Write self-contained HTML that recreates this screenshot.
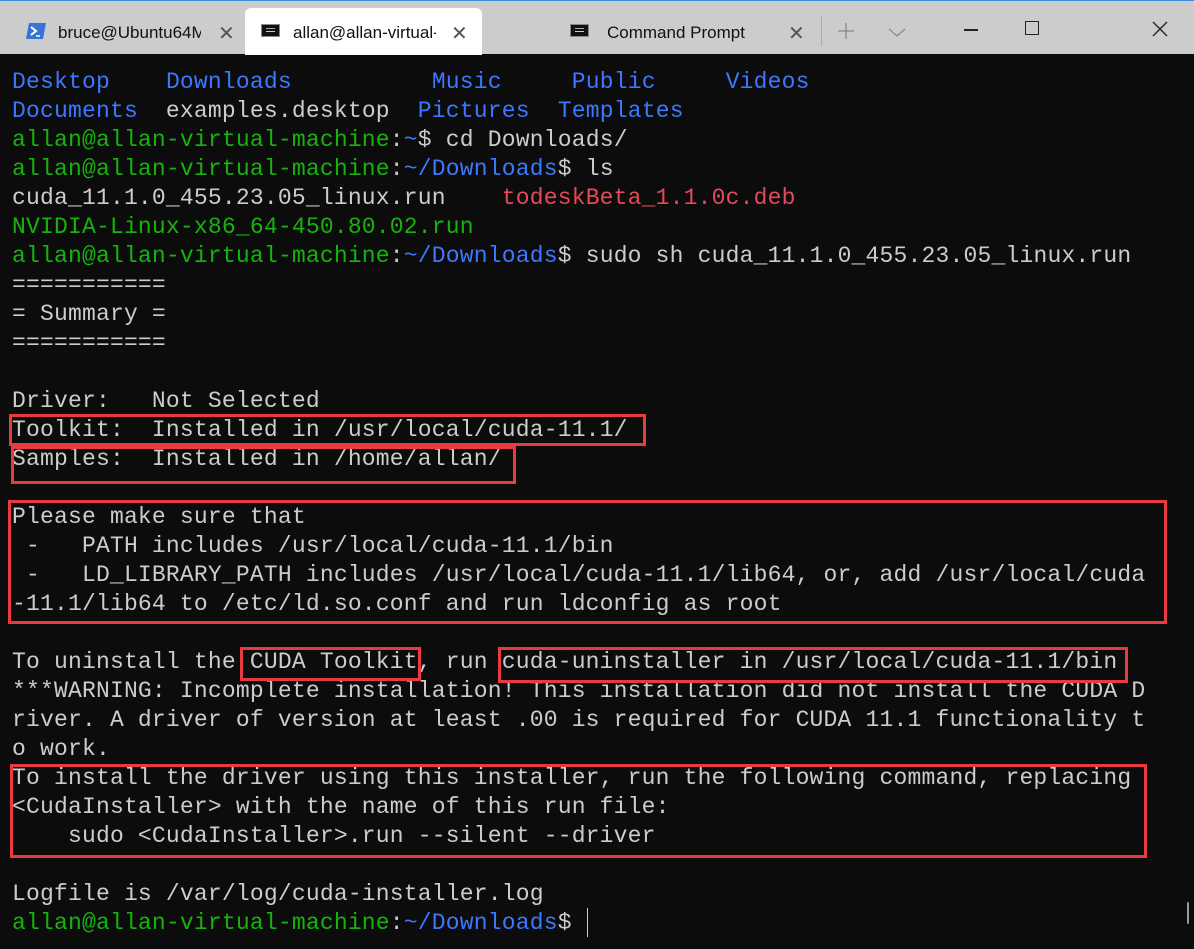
<!DOCTYPE html>
<html><head><meta charset="utf-8"><style>
html,body{margin:0;padding:0;width:1194px;height:949px;overflow:hidden;background:#0c0c0c;position:relative;font-family:"Liberation Sans",sans-serif}
.bar{position:absolute;left:0;top:0;width:1194px;height:54px;background:#cccccc;border-top:1px solid #3c8ce0;box-sizing:border-box}
.tab{position:absolute;top:22px;font-size:17px;color:#111;white-space:nowrap;overflow:hidden}
.act{position:absolute;left:245px;top:7px;width:237px;height:47px;background:#fff;border-radius:6px 6px 0 0}
.x{position:absolute;top:20px;font-size:20px;color:#555;font-weight:300}
.cmd{position:absolute;top:23px;width:19px;height:13px;background:#111;border:1px solid #888;box-sizing:border-box}
.cmd:after{content:"";position:absolute;left:4px;top:3px;width:9px;height:2px;border-top:1px solid #aaa;border-bottom:1px solid #ccc}
pre{position:absolute;left:12px;top:68px;margin:0;font-family:"Liberation Mono",monospace;font-size:23px;line-height:29px;color:#cccccc;letter-spacing:0.19px}
.b{color:#3b78ff}.g{color:#16b30c}.r{color:#e74856}
.box{position:absolute;border:3px solid #e83a3f;box-sizing:border-box}
</style></head><body>
<div class="bar">
 <svg style="position:absolute;left:26px;top:22px" width="20" height="16" viewBox="0 0 20 16"><polygon points="3,0 20,0 17,16 0,16" fill="#3a73d6"/><path d="M5 4 L10 8 L5 12" stroke="#fff" stroke-width="2" fill="none"/><path d="M10 13 H14" stroke="#fff" stroke-width="1.5"/></svg>
 <div class="tab" style="left:58px;width:143px">bruce@Ubuntu64ML</div>
 <div class="x" style="left:218px">✕</div>
 <div class="act"></div>
 <div class="cmd" style="left:261px"></div>
 <div class="tab" style="left:293px;width:143px">allan@allan-virtual-r</div>
 <div class="x" style="left:451px">✕</div>
 <div class="cmd" style="left:570px"></div>
 <div class="tab" style="left:607px">Command Prompt</div>
 <div class="x" style="left:788px">✕</div>
 <div style="position:absolute;left:821px;top:16px;width:1px;height:29px;background:#aaa"></div>
 <svg style="position:absolute;left:836px;top:20px" width="20" height="20"><path d="M10 2V18M2 10H18" stroke="#888" stroke-width="1.3"/></svg>
 <svg style="position:absolute;left:887px;top:25px" width="20" height="12"><path d="M2 3L10 10L18 3" stroke="#888" stroke-width="1.2" fill="none"/></svg>
 <div style="position:absolute;left:964px;top:28px;width:14px;height:1.5px;background:#222"></div>
 <div style="position:absolute;left:1025px;top:20px;width:14px;height:14px;border:1.3px solid #222;box-sizing:border-box"></div>
 <svg style="position:absolute;left:1152px;top:20px" width="16" height="16"><path d="M1 1L15 15M15 1L1 15" stroke="#222" stroke-width="1.4"/></svg>
</div>
<pre><span class="b">Desktop</span>    <span class="b">Downloads</span>          <span class="b">Music</span>     <span class="b">Public</span>     <span class="b">Videos</span>
<span class="b">Documents</span>  examples.desktop  <span class="b">Pictures</span>  <span class="b">Templates</span>
<span class="g">allan@allan-virtual-machine</span>:<span class="b">~</span>$ cd Downloads/
<span class="g">allan@allan-virtual-machine</span>:<span class="b">~/Downloads</span>$ ls
cuda_11.1.0_455.23.05_linux.run    <span class="r">todeskBeta_1.1.0c.deb</span>
<span class="g">NVIDIA-Linux-x86_64-450.80.02.run</span>
<span class="g">allan@allan-virtual-machine</span>:<span class="b">~/Downloads</span>$ sudo sh cuda_11.1.0_455.23.05_linux.run
===========
= Summary =
===========

Driver:   Not Selected
Toolkit:  Installed in /usr/local/cuda-11.1/
Samples:  Installed in /home/allan/

Please make sure that
 -   PATH includes /usr/local/cuda-11.1/bin
 -   LD_LIBRARY_PATH includes /usr/local/cuda-11.1/lib64, or, add /usr/local/cuda
-11.1/lib64 to /etc/ld.so.conf and run ldconfig as root

To uninstall the CUDA Toolkit, run cuda-uninstaller in /usr/local/cuda-11.1/bin
***WARNING: Incomplete installation! This installation did not install the CUDA D
river. A driver of version at least .00 is required for CUDA 11.1 functionality t
o work.
To install the driver using this installer, run the following command, replacing
&lt;CudaInstaller&gt; with the name of this run file:
    sudo &lt;CudaInstaller&gt;.run --silent --driver

Logfile is /var/log/cuda-installer.log
<span class="g">allan@allan-virtual-machine</span>:<span class="b">~/Downloads</span>$ </pre>
<div class="box" style="left:9px;top:414px;width:637px;height:32px"></div>
<div class="box" style="left:11px;top:446px;width:505px;height:38px"></div>
<div class="box" style="left:8px;top:500px;width:1159px;height:124px"></div>
<div class="box" style="left:240px;top:647px;width:181px;height:34px"></div>
<div class="box" style="left:498px;top:647px;width:630px;height:36px"></div>
<div class="box" style="left:10px;top:764px;width:1137px;height:94px"></div>
<div style="position:absolute;left:587px;top:908px;width:1px;height:29px;background:#ccc"></div>
<div style="position:absolute;left:1187px;top:902px;width:2px;height:22px;background:#999;border-radius:1px"></div>
</body></html>
